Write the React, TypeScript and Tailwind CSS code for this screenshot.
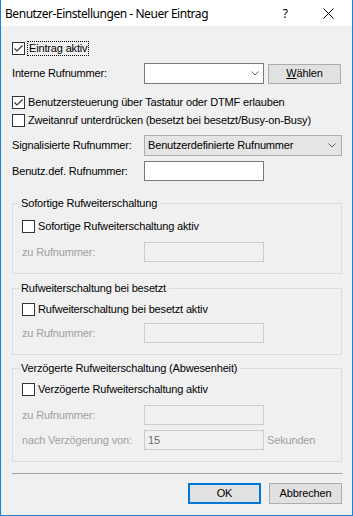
const ui = "font-['Liberation_Sans',Arial,sans-serif] text-[11px] leading-[13px] tracking-[-0.16px]";

function CheckBox({ checked, label, focus }: { checked?: boolean; label: string; focus?: boolean }) {
    return (
        <div className="flex h-[16px] items-center">
            <span className="flex h-[13px] w-[13px] items-center justify-center border border-[#333333] bg-white">
                {checked && (
                    <svg width="11" height="11" viewBox="0 0 11 11">
                        <path d="M1.5 5.5 L4 8 L9.5 2.5" fill="none" stroke="#333333" strokeWidth="1.2" />
                    </svg>
                )}
            </span>
            <span className={focus ? "ml-[2px] border border-dotted border-black px-px" : "ml-[3px]"}>
                {label}
            </span>
        </div>
    );
}

function Chevron() {
    return (
        <svg width="8" height="5" viewBox="0 0 8 5">
            <path d="M0.5 0.5 L4 4 L7.5 0.5" fill="none" stroke="#606060" strokeWidth="1" />
        </svg>
    );
}

function FieldRow({
    label,
    value,
    disabled,
    suffix,
    top,
    labelW = "w-[132px]",
}: {
    label: string;
    value?: string;
    disabled?: boolean;
    suffix?: string;
    top: string;
    labelW?: string;
}) {
    return (
        <div className={`flex h-[20px] items-center ${top}`}>
            <span className={`${labelW} ${disabled ? "text-[#a0a0a0]" : ""}`}>{label}</span>
            <div
                className={`flex h-[20px] w-[120px] items-center px-[3px] ${
                    disabled ? "border border-[#cccccc] bg-[#f0f0f0] text-[#6d6d6d]" : "border border-[#7a7a7a] bg-white"
                }`}
            >
                {value}
            </div>
            {suffix && <span className="ml-[3px] text-[#a0a0a0]">{suffix}</span>}
        </div>
    );
}

function Group({ title, children, top }: { title: string; children: React.ReactNode; top: string }) {
    return (
        <fieldset className={`mr-[10px] border border-[#dcdcdc] pb-[11px] ${top}`}>
            <legend className="ml-[7px] pl-px pr-[3px]">{title}</legend>
            <div className="pl-[9px]">{children}</div>
        </fieldset>
    );
}

export default function App() {
    return (
        <div className={`flex h-[516px] w-[353px] flex-col border-x border-b border-[#1883d7] bg-[#f0f0f0] text-black ${ui}`}>
            <div className="flex h-[26px] items-center bg-white tracking-normal">
                <span className="ml-[4px] font-['Noto_Sans',sans-serif] text-[12px] tracking-[-0.45px]">
                    Benutzer-Einstellungen - Neuer Eintrag
                </span>
                <span className="ml-auto font-['Noto_Sans',sans-serif] text-[12px]">?</span>
                <svg className="ml-[35px] mr-[18px]" width="11" height="11" viewBox="0 0 11 11">
                    <path d="M0.5 0.5 L10.5 10.5 M10.5 0.5 L0.5 10.5" stroke="#000" strokeWidth="1" />
                </svg>
            </div>

            <div className="flex flex-1 flex-col pl-[11px]">
                <div className="mt-[14px]">
                    <CheckBox checked focus label="Eintrag aktiv" />
                </div>

                <div className="mt-[7px] flex h-[21px] items-center">
                    <span className="w-[132px]">Interne Rufnummer:</span>
                    <div className="flex h-[21px] w-[120px] items-center justify-end border border-[#7a7a7a] bg-white pr-[4px]">
                        <Chevron />
                    </div>
                    <button className="ml-[4px] h-[20px] w-[73px] border border-[#adadad] bg-[#e1e1e1]">
                        <span className="underline">W</span>ählen
                    </button>
                </div>

                <div className="mt-[10px]">
                    <CheckBox checked label="Benutzersteuerung über Tastatur oder DTMF erlauben" />
                </div>
                <div className="mt-[2px]">
                    <CheckBox label="Zweitanruf unterdrücken (besetzt bei besetzt/Busy-on-Busy)" />
                </div>

                <div className="mt-[7px] flex h-[21px] items-center">
                    <span className="w-[132px]">Signalisierte Rufnummer:</span>
                    <div className="flex h-[21px] w-[198px] items-center border border-[#acacac] bg-[#e5e5e5] pl-[3px] pr-[5px]">
                        <span>Benutzerdefinierte Rufnummer</span>
                        <span className="ml-auto">
                            <Chevron />
                        </span>
                    </div>
                </div>

                <FieldRow top="mt-[5px]" label="Benutz.def. Rufnummer:" />

                <Group title="Sofortige Rufweiterschaltung" top="mt-[16px]">
                    <div className="mt-[8px]">
                        <CheckBox label="Sofortige Rufweiterschaltung aktiv" />
                    </div>
                    <FieldRow top="mt-[8px]" labelW="w-[122px]" label="zu Rufnummer:" disabled />
                </Group>

                <Group title="Rufweiterschaltung bei besetzt" top="mt-[8px]">
                    <div className="mt-[6px]">
                        <CheckBox label="Rufweiterschaltung bei besetzt aktiv" />
                    </div>
                    <FieldRow top="mt-[6px]" labelW="w-[122px]" label="zu Rufnummer:" disabled />
                </Group>

                <Group title="Verzögerte Rufweiterschaltung (Abwesenheit)" top="mt-[7px]">
                    <div className="mt-[6px]">
                        <CheckBox label="Verzögerte Rufweiterschaltung aktiv" />
                    </div>
                    <FieldRow top="mt-[8px]" labelW="w-[122px]" label="zu Rufnummer:" disabled />
                    <FieldRow
                        top="mt-[5px]"
                        labelW="w-[122px]"
                        label="nach Verzögerung von:"
                        value="15"
                        disabled
                        suffix="Sekunden"
                    />
                </Group>

                <div className="mr-[10px] mt-[11px] h-px bg-[#a0a0a0]" />

                <div className="mr-[10px] mt-[9px] flex justify-end gap-[8px]">
                    <button className="h-[21px] w-[73px] border-2 border-[#0078d7] bg-[#e1e1e1]">OK</button>
                    <button className="h-[21px] w-[73px] border border-[#adadad] bg-[#e1e1e1]">Abbrechen</button>
                </div>
            </div>
        </div>
    );
}
